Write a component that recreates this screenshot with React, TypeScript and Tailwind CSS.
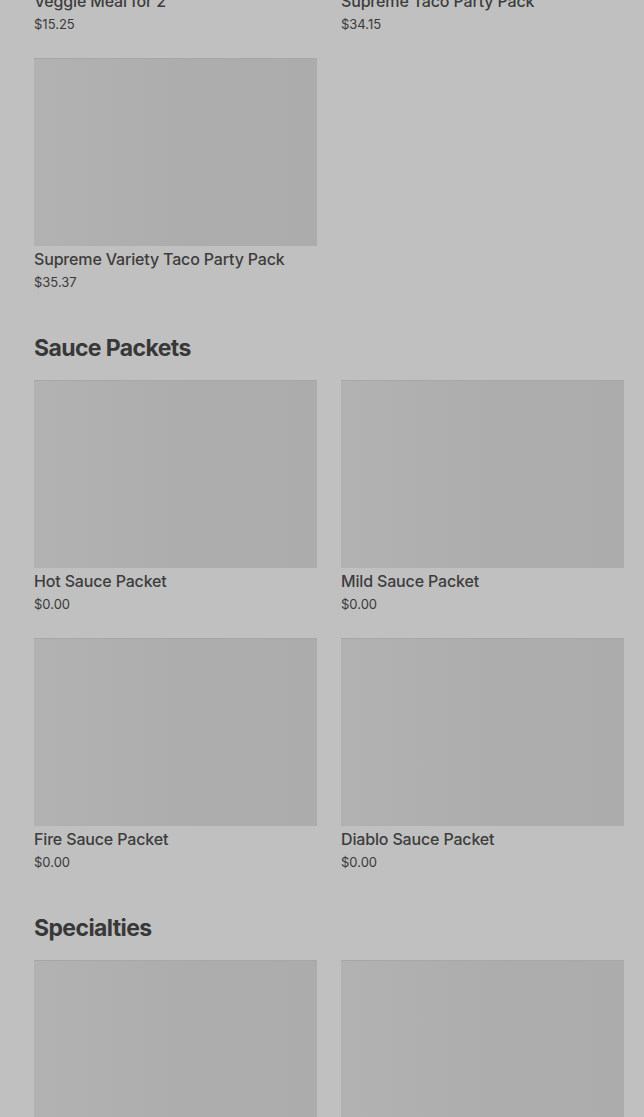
const SECTIONS = [
  {
    title: null,
    items: [
      { name: 'Veggie Meal for 2', price: '$15.25' },
      { name: 'Supreme Taco Party Pack', price: '$34.15' },
      { name: 'Supreme Variety Taco Party Pack', price: '$35.37' },
    ],
  },
  {
    title: 'Sauce Packets',
    items: [
      { name: 'Hot Sauce Packet', price: '$0.00' },
      { name: 'Mild Sauce Packet', price: '$0.00' },
      { name: 'Fire Sauce Packet', price: '$0.00' },
      { name: 'Diablo Sauce Packet', price: '$0.00' },
    ],
  },
  {
    title: 'Specialties',
    items: [
      { name: 'Chalupa Supreme', price: '$4.99' },
      { name: 'Gordita Crunch', price: '$4.79' },
    ],
  },
]

function ItemCard({ name, price }: { name: string; price: string }) {
  return (
    <div className="flex flex-col">
      <div className="h-[188px] border-t border-[#a7a7a7] bg-gradient-to-r from-[#b2b2b2] via-[#adadad] to-[#acacac]" />
      <div className="text-[16px] leading-[26px] font-medium tracking-[-0.16px] text-[#3d3d3d]">{name}</div>
      <div className="text-[13px] leading-5 text-[#3a3a3a]">{price}</div>
    </div>
  )
}

export default function App() {
  return (
    <div
      className="h-[1117px] overflow-hidden bg-[#c0c0c0] pl-[34px] pr-[20px]"
      style={{ fontFamily: 'Inter, "Liberation Sans", sans-serif' }}
    >
      <div className="-mt-[200px]">
        {SECTIONS.map((section, i) => (
          <section key={i}>
            {section.title && (
              <h2 className="mt-[40px] mb-[16px] text-[23px] leading-8 font-bold tracking-[-0.6px] text-[#383838]">
                {section.title}
              </h2>
            )}
            <div className="grid grid-cols-2 gap-x-6 gap-y-6">
              {section.items.map((item) => (
                <ItemCard key={item.name} {...item} />
              ))}
            </div>
          </section>
        ))}
      </div>
    </div>
  )
}
